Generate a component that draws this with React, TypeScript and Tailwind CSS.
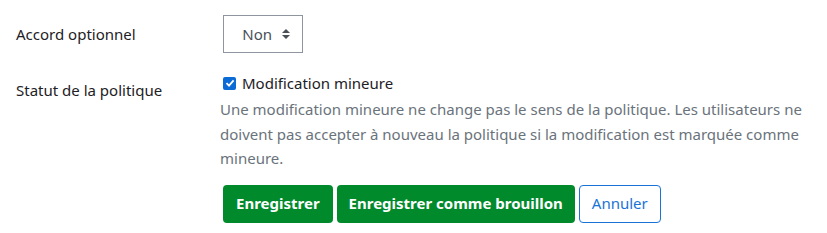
export default function App() {
  return (
    <div className="w-[827px] h-[233px] bg-white text-[15px] text-[#1d2125] font-['Noto_Sans',sans-serif]">
      <div className="pl-4 pt-[15px] flex flex-col">
        <div className="flex items-center">
          <div className="w-[207px]">Accord optionnel</div>
          <SelectBox value="Non" />
        </div>

        <div className="flex mt-[19px]">
          <div className="w-[207px] pt-[7px]">Statut de la politique</div>
          <div className="flex flex-col w-[600px]">
            <label className="flex items-center gap-[6px] leading-[22px]">
              <Checkbox />
              Modification mineure
            </label>
            <p className="-ml-[3px] mt-[3px] text-[#6a737b] leading-[24.5px]">
              Une modification mineure ne change pas le sens de la politique. Les utilisateurs ne
              doivent pas accepter à nouveau la politique si la modification est marquée comme
              mineure.
            </p>
            <div className="flex gap-1 mt-[14px]">
              <button className="h-[38px] px-[13px] rounded-[4px] bg-[#008a2c] text-white font-bold">
                Enregistrer
              </button>
              <button className="h-[38px] px-[12px] rounded-[4px] bg-[#008a2c] text-white font-bold">
                Enregistrer comme brouillon
              </button>
              <button className="h-[38px] px-[12px] rounded-[4px] border border-[#1a73d6] text-[#1a73d6]">
                Annuler
              </button>
            </div>
          </div>
        </div>
      </div>
    </div>
  );
}

function SelectBox({ value }: { value: string }) {
  return (
    <div className="w-[80px] h-[38px] border border-[#8f959e] flex items-center justify-end pr-[12px] gap-[10px] text-[#495057]">
      <span>{value}</span>
      <svg width="8" height="12" viewBox="0 0 8 12" aria-hidden="true">
        <polygon points="4,1 8,5 0,5" fill="#495057" />
        <polygon points="0,7 8,7 4,11" fill="#495057" />
      </svg>
    </div>
  );
}

function Checkbox() {
  return (
    <span className="w-[13px] h-[13px] rounded-[2px] bg-[#0b6bd6] flex items-center justify-center">
      <svg width="10" height="10" viewBox="0 0 10 10" aria-hidden="true">
        <path d="M1.5 5.2 L4 7.6 L8.6 2.4" stroke="white" strokeWidth="1.8" fill="none" />
      </svg>
    </span>
  );
}
